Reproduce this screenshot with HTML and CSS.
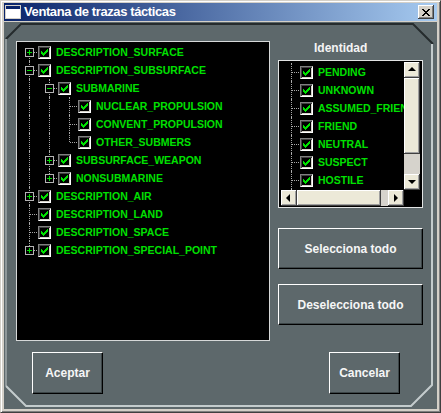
FILE: index.html
```html
<!DOCTYPE html>
<html lang="es">
<head>
<meta charset="utf-8">
<title>Ventana de trazas tácticas</title>
<link rel="stylesheet" href="styles.css">
</head>
<body>
<svg class="defs" width="0" height="0" aria-hidden="true">
  <symbol id="chk" viewBox="0 0 7 7">
    <path d="M6 0h1v1h-1z M5 1h2v1h-2z M0 2h1v1h-1z M4 2h3v1h-3z M0 3h2v1h-2z M3 3h3v1h-3z M0 4h5v1h-5z M1 5h3v1h-3z M2 6h1v1h-1z" fill="#00e000"/>
  </symbol>
</svg>
<div class="window">
  <div class="titlebar">
    <svg class="app-icon" width="16" height="14" viewBox="0 0 16 14">
      <rect x="0.5" y="0.5" width="15" height="13" fill="#fff" stroke="#d4d0c8"/>
      <rect x="1" y="1" width="14" height="3" fill="#0a246a"/>
    </svg>
    <span class="title">Ventana de trazas tácticas</span>
    <span class="close">
      <svg width="8" height="7" viewBox="0 0 8 7"><path d="M0 0h2v1h-2z M6 0h2v1h-2z M1 1h2v1h-2z M5 1h2v1h-2z M2 2h4v1h-4z M3 3h2v1h-2z M2 4h4v1h-4z M1 5h2v1h-2z M5 5h2v1h-2z M0 6h2v1h-2z M6 6h2v1h-2z" fill="#000"/></svg>
    </span>
  </div>
  <div class="client">
    <svg class="bevel" width="433" height="387" viewBox="0 0 433 387" aria-hidden="true">
      <polyline points="2,17 17,2 409,2 429,22" fill="none" stroke="#252b2d" stroke-width="2"/>
      <line x1="2" y1="17" x2="2" y2="364" stroke="#8f989a" stroke-width="2"/>
      <polyline points="2,364 22,384 407,384 428,363 428,22" fill="none" stroke="#c4cccd" stroke-width="2"/>
    </svg>
    <div class="main">
      <div class="tree">
        <div class="row"><span class="cell bot h"><span class="exp plus"></span></span><span class="cb"><svg><use href="#chk"/></svg></span><span class="lbl">DESCRIPTION_SURFACE</span></div>
        <div class="row"><span class="cell v h"><span class="exp"></span></span><span class="cb"><svg><use href="#chk"/></svg></span><span class="lbl">DESCRIPTION_SUBSURFACE</span></div>
        <div class="row"><span class="cell v"></span><span class="cell v h"><span class="exp"></span></span><span class="cb"><svg><use href="#chk"/></svg></span><span class="lbl">SUBMARINE</span></div>
        <div class="row"><span class="cell v"></span><span class="cell v"></span><span class="cell v h"></span><span class="cb"><svg><use href="#chk"/></svg></span><span class="lbl">NUCLEAR_PROPULSION</span></div>
        <div class="row"><span class="cell v"></span><span class="cell v"></span><span class="cell v h"></span><span class="cb"><svg><use href="#chk"/></svg></span><span class="lbl">CONVENT_PROPULSION</span></div>
        <div class="row"><span class="cell v"></span><span class="cell v"></span><span class="cell top h"></span><span class="cb"><svg><use href="#chk"/></svg></span><span class="lbl">OTHER_SUBMERS</span></div>
        <div class="row"><span class="cell v"></span><span class="cell v h"><span class="exp plus"></span></span><span class="cb"><svg><use href="#chk"/></svg></span><span class="lbl">SUBSURFACE_WEAPON</span></div>
        <div class="row"><span class="cell v"></span><span class="cell top h"><span class="exp plus"></span></span><span class="cb"><svg><use href="#chk"/></svg></span><span class="lbl">NONSUBMARINE</span></div>
        <div class="row"><span class="cell v h"><span class="exp plus"></span></span><span class="cb"><svg><use href="#chk"/></svg></span><span class="lbl">DESCRIPTION_AIR</span></div>
        <div class="row"><span class="cell v h"></span><span class="cb"><svg><use href="#chk"/></svg></span><span class="lbl">DESCRIPTION_LAND</span></div>
        <div class="row"><span class="cell v h"></span><span class="cb"><svg><use href="#chk"/></svg></span><span class="lbl">DESCRIPTION_SPACE</span></div>
        <div class="row"><span class="cell top h"><span class="exp plus"></span></span><span class="cb"><svg><use href="#chk"/></svg></span><span class="lbl">DESCRIPTION_SPECIAL_POINT</span></div>
      </div>
      <div class="side">
        <div class="side-label">Identidad</div>
        <div class="listbox">
          <div class="list-items">
            <div class="row"><span class="cell v h"></span><span class="cb"><svg><use href="#chk"/></svg></span><span class="lbl">PENDING</span></div>
            <div class="row"><span class="cell v h"></span><span class="cb"><svg><use href="#chk"/></svg></span><span class="lbl">UNKNOWN</span></div>
            <div class="row"><span class="cell v h"></span><span class="cb"><svg><use href="#chk"/></svg></span><span class="lbl">ASSUMED_FRIEND</span></div>
            <div class="row"><span class="cell v h"></span><span class="cb"><svg><use href="#chk"/></svg></span><span class="lbl">FRIEND</span></div>
            <div class="row"><span class="cell v h"></span><span class="cb"><svg><use href="#chk"/></svg></span><span class="lbl">NEUTRAL</span></div>
            <div class="row"><span class="cell v h"></span><span class="cb"><svg><use href="#chk"/></svg></span><span class="lbl">SUSPECT</span></div>
            <div class="row"><span class="cell v h"></span><span class="cb"><svg><use href="#chk"/></svg></span><span class="lbl">HOSTILE</span></div>
            <div class="row"><span class="cell v"></span></div>
          </div>
          <div class="vscroll">
            <span class="sbtn"><span class="arr up"></span></span>
            <span class="thumb v-thumb"></span>
            <span class="track"></span>
            <span class="sbtn"><span class="arr down"></span></span>
          </div>
          <div class="hscroll">
            <span class="sbtn"><span class="arr left"></span></span>
            <span class="thumb h-thumb"></span>
            <span class="track"></span>
            <span class="sbtn"><span class="arr right"></span></span>
          </div>
          <div class="corner"></div>
        </div>
        <button class="btn wide first">Selecciona todo</button>
        <button class="btn wide second">Deselecciona todo</button>
      </div>
    </div>
    <div class="actions">
      <button class="btn small">Aceptar</button>
      <button class="btn small">Cancelar</button>
    </div>
  </div>
</div>
</body>
</html>
```

FILE: styles.css
```css
* { box-sizing: border-box; }

html, body {
  margin: 0;
  padding: 0;
  background: #d4d0c8;
  font-family: "Liberation Sans", Arial, sans-serif;
}

.defs { position: absolute; width: 0; height: 0; }

.window {
  width: 441px;
  height: 413px;
  border: 1px solid;
  border-color: #d4d0c8 #404040 #404040 #d4d0c8;
  box-shadow: inset 1px 1px #ffffff, inset -1px -1px #808080;
  padding: 2px 3px 3px 3px;
  background: #d4d0c8;
  display: flex;
  flex-direction: column;
}

.titlebar {
  height: 18px;
  flex: none;
  display: flex;
  align-items: center;
  padding: 0 3px 0 1px;
  background: linear-gradient(to right, #0a246a, #a6caf0);
}

.app-icon { flex: none; display: block; }

.title {
  flex: 1;
  margin-left: 3px;
  color: #ffffff;
  font-weight: bold;
  font-size: 13px;
  letter-spacing: -0.4px;
  line-height: 18px;
  white-space: nowrap;
}

.close {
  flex: none;
  width: 16px;
  height: 14px;
  display: flex;
  align-items: center;
  justify-content: center;
  background: #d4d0c8;
  box-shadow: inset -1px -1px #404040, inset 1px 1px #ffffff, inset -2px -2px #808080;
}
.close svg { display: block; }

.client {
  flex: 1;
  margin-top: 1px;
  position: relative;
  background: #5d686b;
}

.bevel {
  position: absolute;
  left: 0;
  top: 0;
  pointer-events: none;
}

.main {
  position: relative;
  display: flex;
  padding: 19px 0 0 12px;
}

/* ---- tree ---- */
.tree {
  width: 254px;
  height: 300px;
  flex: none;
  background: #000;
  border: 1px solid #d6d8d8;
  padding: 1px 0 0 2px;
  overflow: hidden;
}

.row {
  display: flex;
  align-items: center;
  height: 18px;
  white-space: nowrap;
}

.cell {
  position: relative;
  flex: none;
  width: 20px;
  height: 18px;
}
.cell.v::before,
.cell.top::before,
.cell.bot::before {
  content: "";
  position: absolute;
  left: 10px;
  width: 0;
  border-left: 1px dotted #a8a8a8;
}
.cell.v::before { top: 0; bottom: 0; }
.cell.top::before { top: 0; height: 9px; }
.cell.bot::before { top: 9px; bottom: 0; }
.cell.h::after {
  content: "";
  position: absolute;
  left: 11px;
  right: 0;
  top: 9px;
  height: 0;
  border-top: 1px dotted #a8a8a8;
}

.exp {
  position: absolute;
  left: 6px;
  top: 5px;
  width: 9px;
  height: 9px;
  border: 1px solid #b4b4b4;
  background: #000;
  z-index: 1;
}
.exp::before {
  content: "";
  position: absolute;
  left: 1px;
  top: 3px;
  width: 5px;
  height: 1px;
  background: #00e000;
}
.exp.plus::after {
  content: "";
  position: absolute;
  left: 3px;
  top: 1px;
  width: 1px;
  height: 5px;
  background: #00e000;
}

.cb {
  flex: none;
  position: relative;
  width: 13px;
  height: 13px;
  margin-left: -1px;
  background: #000;
  border: 1px solid;
  border-color: #808080 #ffffff #ffffff #808080;
  box-shadow: inset 1px 1px #404040, inset -1px -1px #d4d0c8;
  padding: 2px;
}
.cb svg {
  display: block;
  width: 7px;
  height: 7px;
}

.lbl {
  margin-left: 5px;
  color: #00e000;
  font-weight: bold;
  font-size: 10.5px;
  line-height: 18px;
}

/* ---- right side ---- */
.side {
  width: 145px;
  flex: none;
  margin-left: 8px;
  display: flex;
  flex-direction: column;
}

.side-label {
  height: 19px;
  padding-left: 36px;
  color: #f4f4f4;
  font-weight: bold;
  font-size: 12px;
  line-height: 14px;
}

.listbox {
  height: 148px;
  border: 1px solid #e2e4e4;
  padding: 1px 2px 1px 2px;
  background: #000;
  display: grid;
  grid-template-columns: 1fr 16px;
  grid-template-rows: 1fr 16px;
}

.list-items {
  overflow: hidden;
  padding-top: 1px;
}

.vscroll {
  display: flex;
  flex-direction: column;
}
.hscroll {
  display: flex;
}

.sbtn, .thumb {
  flex: none;
  position: relative;
  background: #ece9d8;
  box-shadow: inset -1px -1px #404040, inset 1px 1px #ffffff, inset -2px -2px #a0a0a0;
}
.sbtn { width: 16px; height: 16px; }
.v-thumb { height: 76px; }
.h-thumb { width: 84px; }
.track { flex: 1; background: #d6d3cc; }

.arr {
  position: absolute;
  width: 0;
  height: 0;
  border-style: solid;
  border-color: transparent;
}
.arr.up { left: 4px; top: 5px; border-width: 0 4px 4px 4px; border-bottom-color: #000; }
.arr.down { left: 4px; top: 6px; border-width: 4px 4px 0 4px; border-top-color: #000; }
.arr.left { left: 5px; top: 4px; border-width: 4px 4px 4px 0; border-right-color: #000; }
.arr.right { left: 6px; top: 4px; border-width: 4px 0 4px 4px; border-left-color: #000; }

.corner { background: #000; }

.btn {
  font-family: "Liberation Sans", Arial, sans-serif;
  font-weight: bold;
  font-size: 12px;
  color: #f6f6f6;
  background: #5d686b;
  border: 1px solid;
  border-color: #ffffff #000000 #000000 #ffffff;
  box-shadow: inset -1px -1px #3c4547;
  padding: 0;
  cursor: pointer;
}
.btn.wide { width: 145px; height: 41px; }
.btn.first { margin-top: 20px; }
.btn.second { margin-top: 15px; }

.actions {
  position: relative;
  display: flex;
  justify-content: space-between;
  padding: 11px 37px 0 28px;
}
.btn.small { width: 71px; height: 42px; }
```
